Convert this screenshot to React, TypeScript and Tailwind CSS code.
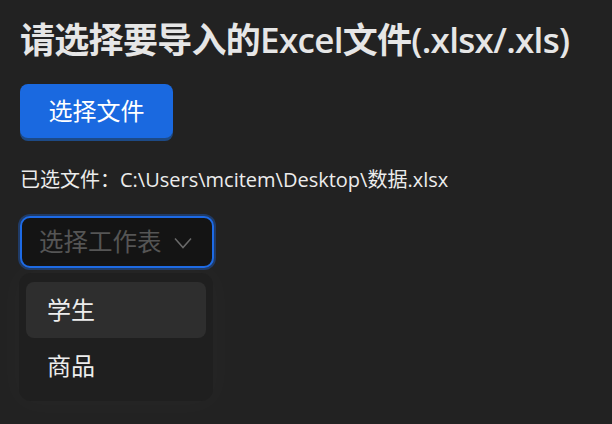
const font = "font-['Open_Sans','Noto_Sans_CJK_SC',sans-serif]"

const sheets = ["学生", "商品"]

export default function App() {
  return (
    <div className={`min-h-screen w-full bg-[#222222] px-5 pt-5 ${font}`}>
      <h1 className="text-[35px] leading-[40px] font-bold text-[#e6e6e6] tracking-[-0.7px]">
        请选择要导入的<span className="font-semibold">Excel</span>文件<span className="font-semibold">(.xlsx/.xls)</span>
      </h1>

      <button className="mt-6 h-[54px] w-[153px] rounded-lg bg-[#1a69e0] text-[24px] text-white shadow-[0_3px_0_#1d4a86]">
        选择文件
      </button>

      <p className="mt-[30px] text-[20px] leading-6 text-[#ececec]">
        已选文件：C:\Users\mcitem\Desktop\数据.xlsx
      </p>

      <div className="relative mt-[24px] w-[194px]">
        <div className="flex h-[52px] items-center gap-3 rounded-[10px] border-2 border-[#1d6ae5] bg-[#141414] pl-[17px] shadow-[0_0_0_2px_rgba(29,106,229,0.35)]">
          <span className="text-[24.5px] text-[#555555]">选择工作表</span>
          <svg width="18" height="12" viewBox="0 0 18 12" fill="none" className="mt-[2px]">
            <path d="M1 1.5 L9 10.5 L17 1.5" stroke="#6a6a6a" strokeWidth="1.5" />
          </svg>
        </div>

        <div className="absolute left-[-1px] top-full mt-[5px] w-[194px] rounded-xl bg-[#1f1f1f] px-[7px] pt-[9px] pb-[7px] shadow-[0_0_30px_8px_rgba(255,255,255,0.02)]">
          {sheets.map((name, i) => (
            <div
              key={name}
              className={`flex h-[56px] items-center rounded-lg pl-[21px] text-[24px] text-[#ededed] ${i === 0 ? "bg-[#2e2e2e]" : ""}`}
            >
              {name}
            </div>
          ))}
        </div>
      </div>
    </div>
  )
}
